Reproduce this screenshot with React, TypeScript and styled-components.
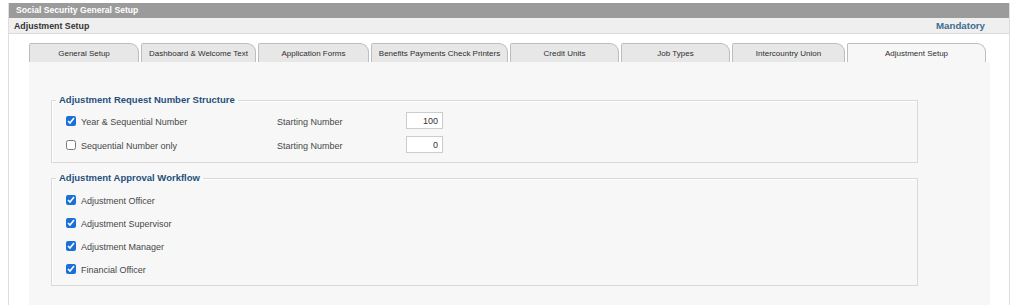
import styled, { createGlobalStyle } from "styled-components";

const GlobalStyle = createGlobalStyle`
    body {
        margin: 0;
        background: #ffffff;
        font-family: "Liberation Sans", Arial, sans-serif;
    }
`;

const Page = styled.div`
    padding: 3px 0 0 8px;
    height: 305px;
    box-sizing: border-box;
    overflow: hidden;
`;

const Frame = styled.div`
    width: 1002px;
    height: 100%;
    box-sizing: border-box;
    border-left: 1px solid #dedede;
    border-right: 1px solid #dedede;
`;

const TitleBar = styled.div`
    height: 15px;
    line-height: 15px;
    background: #9b9b9b;
    color: #ffffff;
    font-size: 8.6px;
    font-weight: 700;
    padding-left: 7px;
`;

const SubHeader = styled.div`
    height: 15px;
    display: flex;
    align-items: center;
    justify-content: space-between;
    background: #efefef;
    border-bottom: 1px solid #dcdcdc;
    padding: 0 24px 0 5px;
    font-weight: 700;
`;

const SubTitle = styled.span`
    font-size: 8.8px;
    color: #333333;
`;

const Mandatory = styled.span`
    font-size: 9.7px;
    color: #3c6c8e;
`;

const Body = styled.div`
    padding: 9px 19px 0 20px;
`;

const TabRow = styled.div`
    display: flex;
    gap: 2px;
    height: 19px;
`;

const Tab = styled.div<{ $width: number; $active?: boolean }>`
    width: ${({ $width }) => $width}px;
    box-sizing: border-box;
    display: flex;
    align-items: center;
    justify-content: center;
    font-size: 8px;
    color: #2e2e2e;
    background: ${({ $active }) => ($active ? "#f7f7f7" : "#e7e7e7")};
    border: 1px solid #bdbdbd;
    border-bottom: none;
    border-top-left-radius: 2px;
    border-top-right-radius: 9px;
    padding-top: 1px;
`;

const Panel = styled.div`
    width: 961px;
    height: 243px;
    box-sizing: border-box;
    background: #f7f7f7;
    padding: 32px 0 0 22px;
`;

const Group = styled.fieldset<{ $gap?: number; $top?: number }>`
    width: 867px;
    box-sizing: border-box;
    margin: ${({ $gap }) => $gap ?? 0}px 0 0 0;
    padding: ${({ $top }) => $top ?? 4}px 14px 4px 14px;
    border: 1px solid #d9d9d9;
    box-shadow: inset 1px 1px 0 #ffffff;
    min-inline-size: 0;
`;

const Legend = styled.legend`
    margin-left: -10px;
    padding: 0 3px;
    line-height: 12px;
    font-size: 9.5px;
    font-weight: 700;
    color: #1f4f7b;
`;

const NumberRow = styled.div`
    display: grid;
    grid-template-columns: 211px 129px 37px;
    align-items: center;
    height: 24px;
`;

const CheckRow = styled.label<{ $height?: number }>`
    display: flex;
    align-items: center;
    gap: 5px;
    height: ${({ $height }) => $height ?? 23}px;
    font-size: 9px;
    color: #474747;
`;

const Check = styled.input.attrs({ type: "checkbox" })`
    width: 10px;
    height: 10px;
    margin: -2px 0 0 0;
    accent-color: #1b6fd9;
`;

const FieldLabel = styled.span`
    font-size: 9px;
    color: #474747;
`;

const NumberInput = styled.input`
    width: 37px;
    height: 17px;
    box-sizing: border-box;
    border: 1px solid #cccccc;
    background: #ffffff;
    padding: 0 4px;
    text-align: right;
    font-family: "Liberation Sans", Arial, sans-serif;
    font-size: 9px;
    color: #333333;
    margin-top: -3px;
    outline: none;
`;

const tabs = [
    { label: "General Setup", width: 110 },
    { label: "Dashboard & Welcome Text", width: 115 },
    { label: "Application Forms", width: 111 },
    { label: "Benefits Payments Check Printers", width: 137 },
    { label: "Credit Units", width: 109 },
    { label: "Job Types", width: 109 },
    { label: "Intercountry Union", width: 113 },
    { label: "Adjustment Setup", width: 139, active: true },
];

const numberRows = [
    { label: "Year & Sequential Number", checked: true, value: "100" },
    { label: "Sequential Number only", checked: false, value: "0" },
];

const workflow = [
    "Adjustment Officer",
    "Adjustment Supervisor",
    "Adjustment Manager",
    "Financial Officer",
];

const App = () => {
    return (
        <>
            <GlobalStyle />
            <Page>
                <Frame>
                    <TitleBar>Social Security General Setup</TitleBar>
                    <SubHeader>
                        <SubTitle>Adjustment Setup</SubTitle>
                        <Mandatory>Mandatory</Mandatory>
                    </SubHeader>
                    <Body>
                        <TabRow>
                            {tabs.map((t) => (
                                <Tab key={t.label} $width={t.width} $active={t.active}>
                                    {t.label}
                                </Tab>
                            ))}
                        </TabRow>
                        <Panel>
                            <Group>
                                <Legend>Adjustment Request Number Structure</Legend>
                                {numberRows.map((r) => (
                                    <NumberRow key={r.label}>
                                        <CheckRow $height={24}>
                                            <Check defaultChecked={r.checked} />
                                            {r.label}
                                        </CheckRow>
                                        <FieldLabel>Starting Number</FieldLabel>
                                        <NumberInput readOnly value={r.value} />
                                    </NumberRow>
                                ))}
                            </Group>
                            <Group $gap={9} $top={5}>
                                <Legend>Adjustment Approval Workflow</Legend>
                                {workflow.map((w) => (
                                    <CheckRow key={w}>
                                        <Check defaultChecked />
                                        {w}
                                    </CheckRow>
                                ))}
                            </Group>
                        </Panel>
                    </Body>
                </Frame>
            </Page>
        </>
    );
};

export default App;
